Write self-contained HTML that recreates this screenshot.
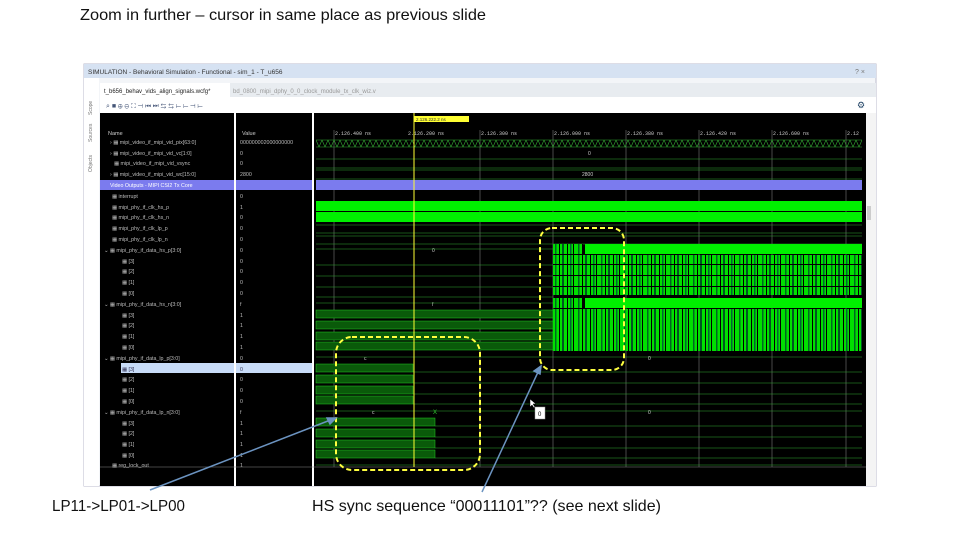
<!DOCTYPE html>
<html><head><meta charset="utf-8"><style>
html,body{margin:0;padding:0;background:#fff;}
svg{display:block;font-family:"Liberation Sans",sans-serif;}
</style></head><body>
<svg width="960" height="540" viewBox="0 0 960 540" xmlns="http://www.w3.org/2000/svg">
<defs>
<pattern id="hs" x="553" y="0" width="23" height="10" patternUnits="userSpaceOnUse">
<rect width="23" height="10" fill="#00e000"/>
<rect x="2" width="1.5" height="10" fill="#062"/><rect x="6" width="1" height="10" fill="#000"/>
<rect x="9" width="2" height="10" fill="#052"/><rect x="14" width="1" height="10" fill="#000"/>
<rect x="17" width="1.5" height="10" fill="#063"/><rect x="20" width="1" height="10" fill="#000"/>
</pattern>
<pattern id="zz" x="316" y="140" width="6" height="7" patternUnits="userSpaceOnUse">
<path d="M0 0 L3 7 L6 0" fill="none" stroke="#3a3" stroke-width="0.6"/>
</pattern>
</defs>
<text x="80" y="20" font-size="16" fill="#111" textLength="406" lengthAdjust="spacingAndGlyphs">Zoom in further – cursor in same place as previous slide</text>
<!-- window -->
<rect x="84" y="64" width="792" height="422" fill="#f3f5f8" stroke="#bbc" />
<rect x="84" y="64" width="792" height="14" fill="#d6e2f2"/>
<text x="88" y="74" font-size="6.5" fill="#333">SIMULATION - Behavioral Simulation - Functional - sim_1 - T_u656</text>
<text x="855" y="74" font-size="7" fill="#777">? ×</text>
<rect x="84" y="78" width="15" height="408" fill="#fff"/>
<text x="92" y="115" font-size="5" fill="#777" transform="rotate(-90 92 115)">Scope</text>
<text x="92" y="142" font-size="5" fill="#777" transform="rotate(-90 92 142)">Sources</text>
<text x="92" y="172" font-size="5" fill="#777" transform="rotate(-90 92 172)">Objects</text>
<rect x="100" y="83" width="776" height="14" fill="#e8ecf0"/>
<rect x="100" y="83" width="130" height="14" fill="#fff"/>
<text x="104" y="93" font-size="6" fill="#222">t_b656_behav_vids_align_signals.wcfg*</text>
<text x="233" y="93" font-size="6" fill="#999">bd_0800_mipi_dphy_0_0_clock_module_tx_clk_wiz.v</text>
<rect x="100" y="97" width="776" height="16" fill="#fff"/>
<g fill="#457" font-size="7">
<text x="106" y="108">⌕ ■ ⊕ ⊖ ⛶ ⊣ ⏮ ⏭ ⇆ ⇆ ⊢ ⊢ ⊣ ⊢</text></g>
<text x="857" y="108" font-size="9" fill="#246">⚙</text>
<!-- black panes -->
<rect x="100" y="113" width="766" height="373" fill="#000"/>
<rect x="866" y="113" width="10" height="373" fill="#f4f4f4"/>
<rect x="867" y="206" width="4" height="14" fill="#ccc"/>
<rect x="234" y="113" width="2" height="373" fill="#fff"/>
<rect x="312" y="113" width="2" height="373" fill="#fff"/>
<text x="108" y="135" font-size="5.5" fill="#ccc">Name</text>
<text x="242" y="135" font-size="5.5" fill="#ccc">Value</text>
<!-- rows -->
<g font-size="5.3" fill="#bbb">
<text x="110" y="144">› ▦ mipi_video_if_mipi_vid_pix[63:0]</text><text x="240" y="144">000000002000000000</text>
<text x="110" y="155">› ▦ mipi_video_if_mipi_vid_vc[1:0]</text><text x="240" y="155">0</text>
<text x="114" y="165">▦ mipi_video_if_mipi_vid_vsync</text><text x="240" y="165">0</text>
<text x="110" y="176">› ▦ mipi_video_if_mipi_vid_wc[15:0]</text><text x="240" y="176">2800</text>
</g>
<rect x="100" y="180" width="134" height="10" fill="#7b7bee"/><rect x="236" y="180" width="76" height="10" fill="#7b7bee"/>
<text x="110" y="187" font-size="5.3" fill="#fff">Video Outputs - MIPI CSI2 Tx Core</text>
<g font-size="5.3" fill="#bbb">
<text x="112" y="198">▦ interrupt</text><text x="240" y="198">0</text>
<text x="112" y="209">▦ mipi_phy_if_clk_hs_p</text><text x="240" y="209">1</text>
<text x="112" y="219">▦ mipi_phy_if_clk_hs_n</text><text x="240" y="219">0</text>
<text x="112" y="230">▦ mipi_phy_if_clk_lp_p</text><text x="240" y="230">0</text>
<text x="112" y="241">▦ mipi_phy_if_clk_lp_n</text><text x="240" y="241">0</text>
<text x="104" y="252">⌄ ▦ mipi_phy_if_data_hs_p[3:0]</text><text x="240" y="252">0</text>
<text x="122" y="263">▦ [3]</text><text x="240" y="263">0</text>
<text x="122" y="273">▦ [2]</text><text x="240" y="273">0</text>
<text x="122" y="284">▦ [1]</text><text x="240" y="284">0</text>
<text x="122" y="295">▦ [0]</text><text x="240" y="295">0</text>
<text x="104" y="306">⌄ ▦ mipi_phy_if_data_hs_n[3:0]</text><text x="240" y="306">f</text>
<text x="122" y="317">▦ [3]</text><text x="240" y="317">1</text>
<text x="122" y="327">▦ [2]</text><text x="240" y="327">1</text>
<text x="122" y="338">▦ [1]</text><text x="240" y="338">1</text>
<text x="122" y="349">▦ [0]</text><text x="240" y="349">1</text>
<text x="104" y="360">⌄ ▦ mipi_phy_if_data_lp_p[3:0]</text><text x="240" y="360">0</text>
</g>
<rect x="121" y="363" width="113" height="10" fill="#c8dcf8"/><rect x="236" y="363" width="76" height="10" fill="#c8dcf8"/>
<g font-size="5.3" fill="#bbb">
<text x="122" y="371" fill="#335">▦ [3]</text><text x="240" y="371" fill="#335">0</text>
<text x="122" y="381">▦ [2]</text><text x="240" y="381">0</text>
<text x="122" y="392">▦ [1]</text><text x="240" y="392">0</text>
<text x="122" y="403">▦ [0]</text><text x="240" y="403">0</text>
<text x="104" y="414">⌄ ▦ mipi_phy_if_data_lp_n[3:0]</text><text x="240" y="414">f</text>
<text x="122" y="425">▦ [3]</text><text x="240" y="425">1</text>
<text x="122" y="435">▦ [2]</text><text x="240" y="435">1</text>
<text x="122" y="446">▦ [1]</text><text x="240" y="446">1</text>
<text x="122" y="457">▦ [0]</text><text x="240" y="457">1</text>
<text x="112" y="467">▦ reg_lock_out</text><text x="240" y="467">1</text>
</g>
<line x1="100" y1="467" x2="866" y2="467" stroke="#888" stroke-width="0.6"/>
<!-- waveform -->
<g stroke="#666" stroke-width="0.7">
<line x1="334" y1="130" x2="334" y2="467"/><line x1="480" y1="130" x2="480" y2="467"/>
<line x1="553" y1="130" x2="553" y2="467"/><line x1="626" y1="130" x2="626" y2="467"/>
<line x1="699" y1="130" x2="699" y2="467"/><line x1="772" y1="130" x2="772" y2="467"/>
<line x1="846" y1="130" x2="846" y2="467"/></g>
<g font-size="5" fill="#ccc" font-family="Liberation Mono,monospace">
<text x="335" y="135">2.126.400 ns</text><text x="408" y="135">2.126.200 ns</text>
<text x="481" y="135">2.126.300 ns</text><text x="554" y="135">2.126.000 ns</text>
<text x="627" y="135">2.126.380 ns</text><text x="700" y="135">2.126.420 ns</text>
<text x="773" y="135">2.126.600 ns</text><text x="847" y="135">2.12</text></g>
<rect x="414" y="116" width="55" height="6" fill="#ff3"/>
<text x="416" y="121" font-size="4.5" fill="#333">2.126.222.2 ns</text>
<rect x="316" y="140" width="546" height="7" fill="url(#zz)"/>
<g stroke="#3a3" stroke-width="0.6" fill="none">
<path d="M316 140 h546 M316 147 h546"/>
<path d="M316 159 h546 M316 168 h546 M316 170 h546 M316 179 h546 M316 225 h546 M316 233 h546 M316 236 h546 M316 244 h546"/>
</g>
<text x="588" y="155" font-size="5" fill="#ccc">0</text>
<text x="582" y="176" font-size="5" fill="#ccc">2800</text>
<rect x="316" y="180" width="546" height="10" fill="#7b7bee"/>
<rect x="316" y="201" width="546" height="10" fill="#00f000"/>
<rect x="316" y="212" width="546" height="10" fill="#00f000"/>
<!-- data_hs_p -->
<text x="432" y="252" font-size="5" fill="#ccc">0</text>
<path d="M316 249 H553" stroke="#3a3" stroke-width="0.6"/>
<rect x="553" y="244" width="30" height="10" fill="url(#hs)"/>
<rect x="585" y="244" width="277" height="10" fill="#00f000"/>
<rect x="553" y="255" width="309" height="40" fill="url(#hs)"/>
<rect x="553" y="264" width="309" height="1" fill="#000"/><rect x="553" y="275" width="309" height="1" fill="#000"/><rect x="553" y="286" width="309" height="1" fill="#000"/>
<path d="M316 265 H553 M316 276 H553 M316 287 H553 M316 297 H553" stroke="#3a3" stroke-width="0.6"/>
<!-- data_hs_n -->
<text x="432" y="306" font-size="5" fill="#ccc">f</text>
<path d="M316 303 H553" stroke="#3a3" stroke-width="0.6"/>
<rect x="553" y="298" width="30" height="10" fill="url(#hs)"/>
<rect x="585" y="298" width="277" height="10" fill="#00f000"/>
<g fill="#0a5a0a" stroke="#2c2" stroke-width="0.5">
<rect x="316" y="310" width="237" height="8"/><rect x="316" y="321" width="237" height="8"/>
<rect x="316" y="332" width="237" height="8"/><rect x="316" y="342" width="237" height="8"/></g>
<rect x="553" y="309" width="309" height="42" fill="url(#hs)"/>
<!-- lp_p -->
<text x="364" y="360" font-size="5" fill="#ccc">c</text>
<path d="M316 357 H862" stroke="#3a3" stroke-width="0.6"/>
<text x="648" y="360" font-size="5" fill="#ccc">0</text>
<g fill="#0a5a0a" stroke="#2c2" stroke-width="0.5">
<rect x="316" y="364" width="97" height="8"/><rect x="316" y="375" width="97" height="8"/>
<rect x="316" y="386" width="97" height="8"/><rect x="316" y="396" width="97" height="8"/>
<rect x="316" y="418" width="119" height="8"/><rect x="316" y="429" width="119" height="8"/>
<rect x="316" y="440" width="119" height="8"/><rect x="316" y="450" width="119" height="8"/></g>
<path d="M413 372 H862 M413 383 H862 M413 394 H862 M413 404 H862 M435 426 H862 M435 437 H862 M435 448 H862 M435 458 H862 M316 411 H862 M316 465 H862" stroke="#3a3" stroke-width="0.6"/>
<text x="372" y="414" font-size="5" fill="#ccc">c</text><text x="433" y="414" font-size="6" fill="#3c3">X</text>
<text x="648" y="414" font-size="5" fill="#ccc">0</text>
<line x1="414" y1="113" x2="414" y2="467" stroke="#ff3" stroke-width="1"/>
<!-- annotations -->
<rect x="336" y="337" width="144" height="133" rx="16" fill="none" stroke="#ffff40" stroke-width="2" stroke-dasharray="5 3"/>
<rect x="540" y="228" width="84" height="142" rx="12" fill="none" stroke="#ffff40" stroke-width="2" stroke-dasharray="5 3"/>
<rect x="535" y="407" width="10" height="12" fill="#fff" stroke="#999" stroke-width="0.5"/><text x="538" y="416" font-size="6">0</text>
<path d="M530 399 l0 8 l2 -2 l2 3 l1 -1 l-2 -3 l3 0 z" fill="#fff" stroke="#000" stroke-width="0.5"/>
<g stroke="#6b93c0" stroke-width="1.5" fill="#6b93c0">
<line x1="150" y1="490" x2="333" y2="419"/><path d="M336 418 l-9 0 l3 6 z"/>
<line x1="482" y1="492" x2="539" y2="370"/><path d="M541 366 l-7 5 l6 3 z"/>
</g>
<text x="52" y="511" font-size="16" fill="#111" textLength="133" lengthAdjust="spacingAndGlyphs">LP11-&gt;LP01-&gt;LP00</text>
<text x="312" y="511" font-size="16" fill="#111" textLength="349" lengthAdjust="spacingAndGlyphs">HS sync sequence “00011101”?? (see next slide)</text>
</svg>
</body></html>
